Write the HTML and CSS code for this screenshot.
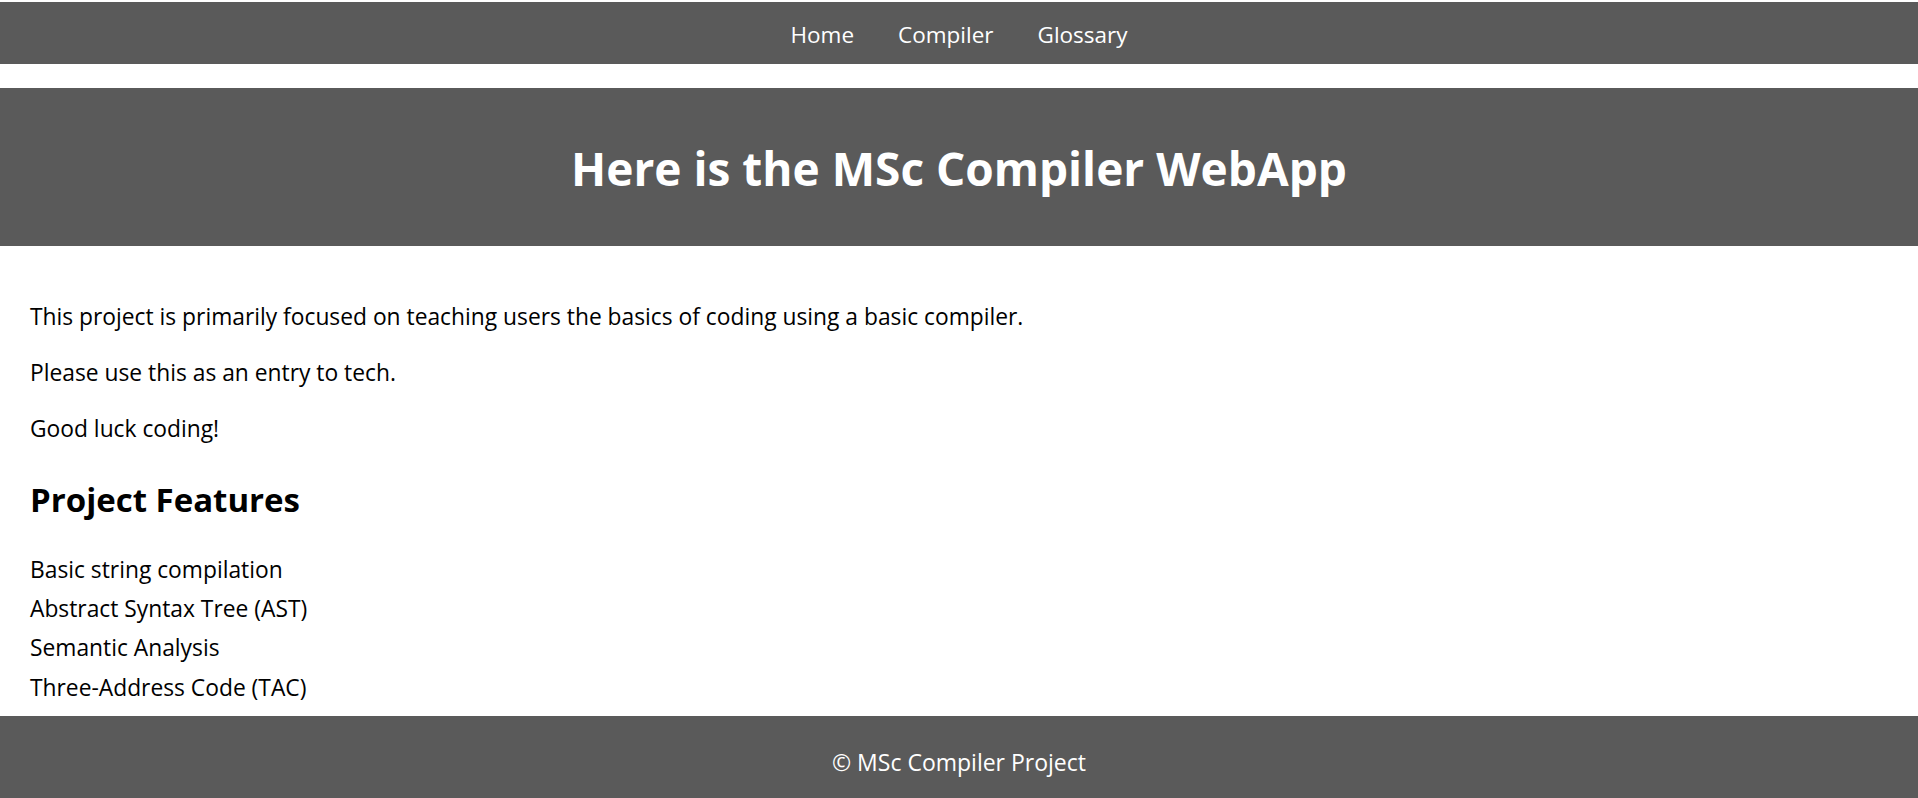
FILE: index.html
```html
<!DOCTYPE html>
<html lang="en">
<head>
<meta charset="utf-8">
<title>MSc Compiler WebApp</title>
<link rel="stylesheet" href="styles.css">
</head>
<body>
<nav class="topnav">
  <a href="#" class="topnav-link">Home</a>
  <a href="#" class="topnav-link">Compiler</a>
  <a href="#" class="topnav-link">Glossary</a>
</nav>
<header class="hero">
  <h1 class="hero-title">Here is the MSc Compiler WebApp</h1>
</header>
<main class="content">
  <p class="intro">This project is primarily focused on teaching users the basics of coding using a basic compiler.</p>
  <p class="intro">Please use this as an entry to tech.</p>
  <p class="intro">Good luck coding!</p>
  <h2 class="section-title">Project Features</h2>
  <ul class="features">
    <li>Basic string compilation</li>
    <li>Abstract Syntax Tree (AST)</li>
    <li>Semantic Analysis</li>
    <li>Three-Address Code (TAC)</li>
  </ul>
</main>
<footer class="site-footer">© MSc Compiler Project</footer>
</body>
</html>
```
FILE: styles.css
```css
* { box-sizing: border-box; }

html, body { margin: 0; padding: 0; }

body {
  font-family: "Open Sans", "Noto Sans", sans-serif;
  color: #000;
  background: #fff;
  min-height: 100vh;
  display: flex;
  flex-direction: column;
}

.topnav {
  margin-top: 2px;
  background: #5a5a5a;
  display: flex;
  justify-content: center;
  gap: 44px;
  padding: 17px 0 13px;
}

.topnav-link {
  color: #fff;
  text-decoration: none;
  font-size: 22.5px;
  line-height: 32px;
}

.hero {
  margin-top: 24px;
  background: #5a5a5a;
  padding: 49px 20px 47px;
  text-align: center;
}

.hero-title {
  margin: 0;
  color: #fff;
  font-size: 46px;
  font-weight: 700;
  line-height: 62px;
}

.content {
  flex: 1;
  padding: 31px 30px 9px;
  font-size: 22.8px;
  line-height: 32px;
}

.intro {
  margin: 24px 0;
}

.section-title {
  margin: 33px 0 28px;
  font-size: 33px;
  font-weight: 700;
  line-height: 44px;
}

.features {
  list-style: none;
  margin: 0;
  padding: 0;
}

.features li {
  line-height: 39.2px;
}

.site-footer {
  background: #5a5a5a;
  color: #fff;
  text-align: center;
  font-size: 23px;
  line-height: 32px;
  padding: 30px 20px 20px;
}
```
